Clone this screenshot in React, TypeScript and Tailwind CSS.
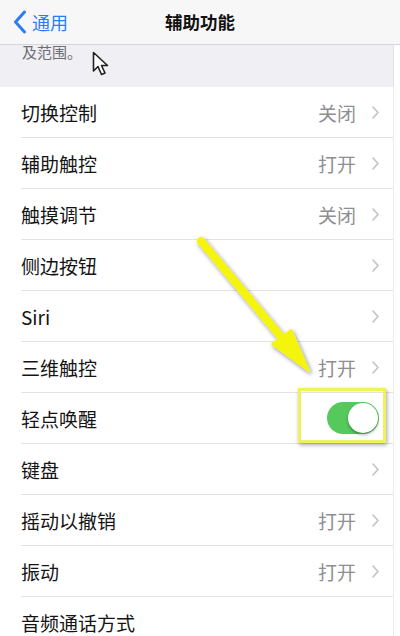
import React from "react";

const rows: { label: string; value?: string; chevron?: boolean; toggle?: boolean }[] = [
  { label: "切换控制", value: "关闭", chevron: true },
  { label: "辅助触控", value: "打开", chevron: true },
  { label: "触摸调节", value: "关闭", chevron: true },
  { label: "侧边按钮", chevron: true },
  { label: "Siri", chevron: true },
  { label: "三维触控", value: "打开", chevron: true },
  { label: "轻点唤醒", toggle: true },
  { label: "键盘", chevron: true },
  { label: "摇动以撤销", value: "打开", chevron: true },
  { label: "振动", value: "打开", chevron: true },
  { label: "音频通话方式" },
];

const Chevron = () => (
  <svg width="7" height="13" viewBox="0 0 7 13" className="ml-[16px] shrink-0">
    <path d="M1 1 L6 6.5 L1 12" fill="none" stroke="#c2c2c6" strokeWidth="1.6" strokeLinecap="round" strokeLinejoin="round" />
  </svg>
);

const Toggle = () => (
  <div className="relative w-[52px] h-[32px] rounded-full bg-[#55c95c] shrink-0">
    <div className="absolute right-[1px] top-[1px] w-[30px] h-[30px] rounded-full bg-white shadow-[0_2px_3px_rgba(0,0,0,0.3)]" />
  </div>
);

export default function App() {
  return (
    <div
      className="relative w-[400px] h-[636px] overflow-hidden bg-white"
      style={{ fontFamily: '"Noto Sans CJK SC", "Noto Sans", sans-serif' }}
    >
      {/* Nav bar */}
      <div className="relative h-[45px] bg-[#f7f7f7] border-b border-[#d6d6d8] flex items-center">
        <div className="flex items-center pl-[13px]">
          <svg width="14" height="24" viewBox="0 0 14 24">
            <path d="M11.5 2 L2.5 12 L11.5 22" fill="none" stroke="#2e7cf3" strokeWidth="3" strokeLinecap="round" strokeLinejoin="round" />
          </svg>
          <span className="ml-[5px] text-[18px] leading-none text-[#2e7cf3]">通用</span>
        </div>
        <div className="absolute inset-0 flex items-center justify-center pointer-events-none">
          <span className="text-[17.5px] font-bold text-[#111]">辅助功能</span>
        </div>
      </div>

      {/* Section footer text (top cut off by nav bar) */}
      <div className="h-[42px] bg-[#efeff4] overflow-hidden pl-[22px] mr-[6px] border-r border-[#e2e2e6]">
        <div className="mt-[-2px] text-[15px] leading-[18px] text-[#6d6d72]">及范围。</div>
      </div>

      {/* List */}
      <div className="bg-white mr-[6px] border-r border-[#ececee]">
        {rows.map((r) => (
          <div key={r.label} className="flex pl-[21px]">
            <div className="flex-1 h-[51px] flex items-center border-b border-[#e3e3e5] pr-[14px]">
              <span className="text-[19px] leading-none text-[#141414]">{r.label}</span>
              <div className="ml-auto flex items-center">
                {r.value && <span className="text-[19px] leading-none text-[#8e8e93]">{r.value}</span>}
                {r.chevron && <Chevron />}
                {r.toggle && <Toggle />}
              </div>
            </div>
          </div>
        ))}
      </div>

      {/* Mouse cursor */}
      <svg className="absolute left-[92px] top-[51px]" width="20" height="27" viewBox="0 0 20 27">
        <path
          d="M1.5 1.5 L1.5 20 L6 15.5 L9.5 23.5 L13 22 L9.5 14.5 L15.5 14.5 Z"
          fill="#fff"
          stroke="#222"
          strokeWidth="1.6"
          strokeLinejoin="round"
        />
      </svg>

      {/* Yellow highlight box */}
      <div className="absolute left-[298px] top-[388px] w-[88px] h-[55px] border-[3px] border-[#eef25c] shadow-[1px_2px_4px_rgba(0,0,0,0.35)]" />

      {/* Yellow arrow */}
      <svg className="absolute left-0 top-0 pointer-events-none" width="400" height="636" viewBox="0 0 400 636">
        <defs>
          <filter id="sh" x="-20%" y="-20%" width="140%" height="140%">
            <feDropShadow dx="1.5" dy="2" stdDeviation="2" floodColor="#000" floodOpacity="0.45" />
          </filter>
        </defs>
        <g filter="url(#sh)">
          <line x1="201" y1="241" x2="287" y2="344" stroke="#f4f40c" strokeWidth="8" strokeLinecap="round" />
          <polygon points="272,344 291,330 309,371" fill="#f4f40c" stroke="#f4f40c" strokeWidth="2" strokeLinejoin="round" />
        </g>
      </svg>
    </div>
  );
}
